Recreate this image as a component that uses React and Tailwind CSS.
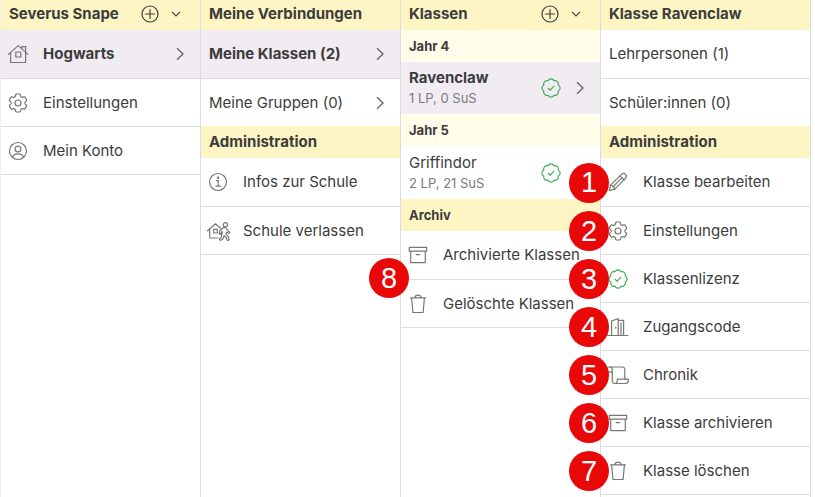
import React from "react";
import { HiOutlineCog6Tooth } from "react-icons/hi2";

function Icon({ className = "text-[#777777]", children }) {
    return (
        <svg
            viewBox="0 0 18 18"
            className={`size-[18px] shrink-0 overflow-visible ${className}`}
            fill="none"
            stroke="currentColor"
            strokeWidth="1.2"
            strokeLinecap="round"
            strokeLinejoin="round"
            aria-hidden="true"
        >
            {children}
        </svg>
    );
}

const HouseIcon = () => (
    <Icon>
        <path d="M-.6 9.4 9.2.6 19 9.4M1.6 7.6v9.9h15V7.6M12.8 3.6V1.6h3.8v5.6" />
        <path d="M6.8 7h5v5h-5z" />
    </Icon>
);

const GearIcon = () => (
    <HiOutlineCog6Tooth className="-mx-[3px] size-6 shrink-0 text-[#777777]" strokeWidth="1.2" />
);

const UserIcon = () => (
    <Icon>
        <circle cx="9" cy="9" r="8.5" />
        <circle cx="9" cy="7" r="2.9" />
        <path d="M3.5 15.2c.6-2.4 2.8-3.4 5.5-3.4s4.9 1 5.5 3.4" />
    </Icon>
);

const InfoIcon = () => (
    <Icon>
        <circle cx="9" cy="9" r="8.5" />
        <path d="M7.4 7.6h1.800v5.400M7 13.200h4.400" />
        <circle cx="9" cy="4.800" r=".6" fill="currentColor" />
    </Icon>
);

const LeaveIcon = () => (
    <Icon>
        <path d="M-1.500 8.800 6.500 1.800l5 4.400M.7 7.400v8.600h8" />
        <path d="M4.700 7.400h3.600v3.600H4.700z" />
        <circle cx="16.400" cy="2.800" r="2.100" />
        <path d="M13.800 6c1.300-.7 3.200-.3 3.900.8l1 1.900 2.100 1.200-.8 1.600-2.500-1.300-.4 2.100 2.100 2.300.8 3.400-1.900.4-.9-2.900-2.100-1.900-1.100 3.200-2.700 1.600-1-1.600 2-1.300 1.100-5.900-1 .6-.5 2.100-1.700-.4.700-3.200z" />
    </Icon>
);

const BadgeIcon = () => (
    <Icon className="text-[#43ad57]">
        <path d="M6 1.800a3.300 3.300 0 0 1 6 0a3.300 3.300 0 0 1 4.200 4.200a3.300 3.300 0 0 1 0 6a3.300 3.300 0 0 1-4.200 4.200a3.300 3.300 0 0 1-6 0a3.300 3.300 0 0 1-4.200-4.200a3.300 3.300 0 0 1 0-6a3.300 3.300 0 0 1 4.200-4.200z" />
        <path d="m6.200 9.300 2 1.900 3.800-4" />
    </Icon>
);

const PencilIcon = () => (
    <Icon>
        <path d="m.3 17.700 1.300-5.500L12.500 1.300c1.400-1.400 2.900-1.200 4 0s1.300 2.600 0 4L5.700 16.200z" />
        <path d="M1.600 12.200c2 .2 3.700 1.700 4.100 4M3.900 13.900l9-9M11 2.800l4.200 4.200" />
    </Icon>
);

const DoorIcon = () => (
    <Icon>
        <path d="M-1.500 17.500h20.500M2.600 17.500V3l6.600-2.400v16.900M9.200 2.400h5.400v15.100M6.800 9v1.200M12 4.800v12.700" />
    </Icon>
);

const ScrollIcon = () => (
    <Icon>
        <path d="M-1 1h14.300c1.700 0 2.500 1.200 2.500 2.800v9.400M-1.200 6.200h4.400V14c0 2 .9 3.500 2.900 3.500" />
        <path d="M3.200 6.200V3.400C3.200 2 2.300 1 .9 1M6.100 17.500c1.600 0 2.200-1.300 2.200-4.300h11v1.300c0 1.900-.9 3-2.600 3z" />
    </Icon>
);

const ArchiveIcon = () => (
    <Icon>
        <path d="M.3 1.400h17.400v3.800H.3zM1.700 5.200v11.400h14.600V5.200M7.200 8.600h3.600" />
    </Icon>
);

const TrashIcon = () => (
    <Icon>
        <path d="M1.500 2.800h15M2.600 3l1.300 14.500h10.200L15.400 3M5.800 2.600C6.100.9 7 .1 9 .1s2.900.8 3.200 2.500" />
    </Icon>
);

function ChevronRight() {
    return (
        <svg
            viewBox="0 0 8 14"
            className="h-[14px] w-2 shrink-0 text-[#666666]"
            fill="none"
            stroke="currentColor"
            strokeWidth="1.4"
            aria-hidden="true"
        >
            <path d="m1 1.200 6 5.800-6 5.800" />
        </svg>
    );
}

function Marker({ number, className = "top-1/2 -translate-y-1/2" }) {
    return (
        <span
            className={`absolute -left-8 z-10 flex size-10 items-center justify-center rounded-full bg-[#e80808] font-['Liberation_Sans',Arial,sans-serif] text-[29px] leading-none font-normal text-white ${className}`}
        >
            {number}
        </span>
    );
}

function Column({ title, actions, last, children }) {
    return (
        <section
            className={`min-w-0 border-l border-[#dcdcdc] first:border-[#f0efe6] ${last ? "border-r" : ""}`}
        >
            <header className="flex h-[30px] items-center bg-[#fdf6c4] pr-[19px] pb-0.5 pl-2">
                <h2 className="grow text-[15px] leading-5 font-bold whitespace-nowrap">{title}</h2>
                {actions && (
                    <div className="flex items-center gap-3">
                        <button type="button" aria-label="Hinzufügen">
                            <Icon className="text-[#3f3f3f]">
                                <circle cx="9" cy="9" r="8" />
                                <path d="M9 4.500v9M4.500 9h9" />
                            </Icon>
                        </button>
                        <button type="button" aria-label="Menü öffnen">
                            <svg
                                viewBox="0 0 10 6"
                                className="h-1.5 w-2.5 text-[#3f3f3f]"
                                fill="none"
                                stroke="currentColor"
                                strokeWidth="1.2"
                            >
                                <path d="M1 .8 5 4.800l4-4" />
                            </svg>
                        </button>
                    </div>
                )}
            </header>
            {children}
        </section>
    );
}

function SubHeader({ children, className = "bg-[#fdf6c4] text-[15px]" }) {
    return (
        <h3 className={`flex h-8 items-center pl-2 leading-5 font-bold ${className}`}>
            {children}
        </h3>
    );
}

function Menu({ items }) {
    return (
        <ul>
            {items.map((item) => (
                <li key={item.label} className="group relative">
                    <a
                        href="#"
                        className={`flex items-center gap-4 border-[#dcdcdc] pr-4 pl-2 group-first:h-[49px] ${item.active ? "bg-[#f1ecf2] font-bold" : ""} ${item.open ? "h-[47px]" : "h-12 border-b"}`}
                    >
                        {item.icon}
                        <span className="grow whitespace-nowrap">{item.label}</span>
                        {item.arrow && <ChevronRight />}
                    </a>
                    {item.marker}
                </li>
            ))}
        </ul>
    );
}

function ClassRow({ name, info, active }) {
    return (
        <a
            href="#"
            className={`flex items-center pr-4 pl-2 ${active ? "h-[52px] bg-[#f1ecf2]" : "h-[53px]"}`}
        >
            <span className="grow">
                <span className={`block leading-5 ${active ? "font-bold" : ""}`}>{name}</span>
                <span className="block text-[13px] leading-5 text-[#7a7a7a]">{info}</span>
            </span>
            <BadgeIcon />
            <span className="flex w-6 justify-end">{active && <ChevronRight />}</span>
        </a>
    );
}

const schoolItems = [
    { label: "Hogwarts", icon: <HouseIcon />, arrow: true, active: true },
    { label: "Einstellungen", icon: <GearIcon /> },
    { label: "Mein Konto", icon: <UserIcon /> },
];

const connectionItems = [
    { label: "Meine Klassen (2)", arrow: true, active: true },
    { label: "Meine Gruppen (0)", arrow: true, open: true },
];

const schoolAdminItems = [
    { label: "Infos zur Schule", icon: <InfoIcon /> },
    { label: "Schule verlassen", icon: <LeaveIcon /> },
];

const archiveItems = [
    {
        label: "Archivierte Klassen",
        icon: <ArchiveIcon />,
        marker: <Marker number={8} className="-bottom-4.5" />,
    },
    { label: "Gelöschte Klassen", icon: <TrashIcon /> },
];

const memberItems = [
    { label: "Lehrpersonen (1)" },
    { label: "Schüler:innen (0)", open: true },
];

const classAdminItems = [
    { label: "Klasse bearbeiten", icon: <PencilIcon />, marker: <Marker number={1} /> },
    { label: "Einstellungen", icon: <GearIcon />, marker: <Marker number={2} /> },
    { label: "Klassenlizenz", icon: <BadgeIcon />, marker: <Marker number={3} /> },
    { label: "Zugangscode", icon: <DoorIcon />, marker: <Marker number={4} /> },
    { label: "Chronik", icon: <ScrollIcon />, marker: <Marker number={5} /> },
    { label: "Klasse archivieren", icon: <ArchiveIcon />, marker: <Marker number={6} /> },
    { label: "Klasse löschen", icon: <TrashIcon />, marker: <Marker number={7} /> },
];

function App() {
    return (
        <main className="grid min-h-screen grid-cols-[200fr_200fr_200fr_211fr] bg-white pr-1 font-[Inter,sans-serif] text-[15px] leading-5 text-[#3c3c3c]">
            <Column title="Severus Snape" actions>
                <Menu items={schoolItems} />
            </Column>
            <Column title="Meine Verbindungen">
                <Menu items={connectionItems} />
                <SubHeader>Administration</SubHeader>
                <Menu items={schoolAdminItems} />
            </Column>
            <Column title="Klassen" actions>
                <SubHeader className="bg-[#fffde9] text-[13px]">Jahr 4</SubHeader>
                <ClassRow name="Ravenclaw" info="1 LP, 0 SuS" active />
                <SubHeader className="bg-[#fffde9] text-[13px]">Jahr 5</SubHeader>
                <ClassRow name="Griffindor" info="2 LP, 21 SuS" />
                <SubHeader className="bg-[#fdf6c4] text-[13px]">Archiv</SubHeader>
                <Menu items={archiveItems} />
            </Column>
            <Column title="Klasse Ravenclaw" last>
                <Menu items={memberItems} />
                <SubHeader>Administration</SubHeader>
                <Menu items={classAdminItems} />
            </Column>
        </main>
    );
}

export default App;
